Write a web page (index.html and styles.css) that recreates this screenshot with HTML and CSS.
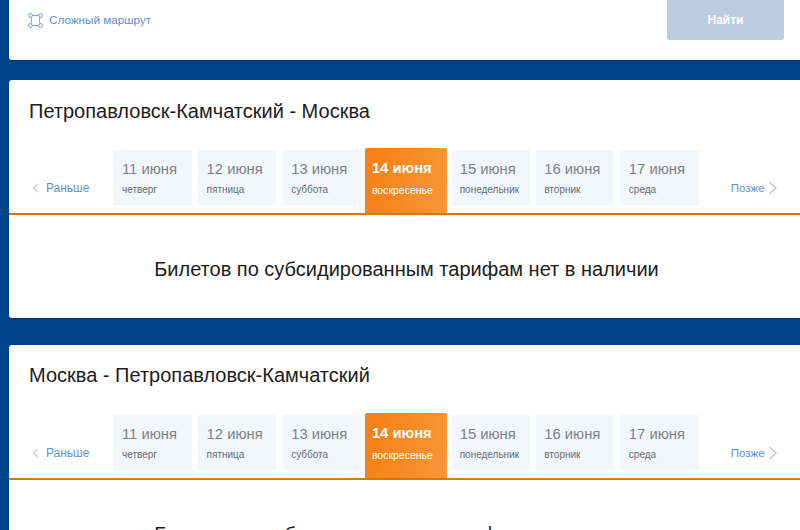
FILE: index.html
```html
<!DOCTYPE html>
<html lang="ru">
  <head>
    <meta charset="UTF-8" />
    <meta name="viewport" content="width=device-width, initial-scale=1.0" />
    <title>Субсидированные билеты</title>
    <link rel="stylesheet" href="styles.css">
  </head>
  <body>
    <div class="card search">
      <a href="#" class="route-link">
        <svg class="route-icon" width="15" height="15" viewBox="0 0 15 15" fill="none" stroke="#6f9bd8" stroke-width="1">
          <path d="M4 2.4 H11 M4 12.6 H11 M3 4.2 Q4 7.5 3 10.8 M12 4.2 Q11 7.5 12 10.8" />
          <circle cx="2.4" cy="2.4" r="1.9" />
          <circle cx="12.6" cy="2.4" r="1.9" />
          <circle cx="2.4" cy="12.6" r="1.9" />
          <circle cx="12.6" cy="12.6" r="1.9" />
        </svg>
        Сложный маршрут
      </a>
      <button class="find-button">Найти</button>
    </div>

    <div class="card flight">
      <h2>Петропавловск-Камчатский - Москва</h2>
      <div class="dates">
        <a href="#" class="nav-link prev">
          <svg width="10" height="14" viewBox="0 0 10 14" fill="none" stroke="#c4c8cd" stroke-width="1.6"><path d="M8.5 1 L2 7 L8.5 13" /></svg>
          Раньше
        </a>
        <div class="tabs">
          <div class="tab"><b>11 июня</b><span>четверг</span></div>
          <div class="tab"><b>12 июня</b><span>пятница</span></div>
          <div class="tab"><b>13 июня</b><span>суббота</span></div>
          <div class="tab active"><b>14 июня</b><span>воскресенье</span></div>
          <div class="tab"><b>15 июня</b><span>понедельник</span></div>
          <div class="tab"><b>16 июня</b><span>вторник</span></div>
          <div class="tab"><b>17 июня</b><span>среда</span></div>
        </div>
        <a href="#" class="nav-link next">
          Позже
          <svg width="10" height="14" viewBox="0 0 10 14" fill="none" stroke="#c4c8cd" stroke-width="1.6"><path d="M1.5 1 L8 7 L1.5 13" /></svg>
        </a>
      </div>
      <p class="message">Билетов по субсидированным тарифам нет в наличии</p>
    </div>

    <div class="card flight">
      <h2>Москва - Петропавловск-Камчатский</h2>
      <div class="dates">
        <a href="#" class="nav-link prev">
          <svg width="10" height="14" viewBox="0 0 10 14" fill="none" stroke="#c4c8cd" stroke-width="1.6"><path d="M8.5 1 L2 7 L8.5 13" /></svg>
          Раньше
        </a>
        <div class="tabs">
          <div class="tab"><b>11 июня</b><span>четверг</span></div>
          <div class="tab"><b>12 июня</b><span>пятница</span></div>
          <div class="tab"><b>13 июня</b><span>суббота</span></div>
          <div class="tab active"><b>14 июня</b><span>воскресенье</span></div>
          <div class="tab"><b>15 июня</b><span>понедельник</span></div>
          <div class="tab"><b>16 июня</b><span>вторник</span></div>
          <div class="tab"><b>17 июня</b><span>среда</span></div>
        </div>
        <a href="#" class="nav-link next">
          Позже
          <svg width="10" height="14" viewBox="0 0 10 14" fill="none" stroke="#c4c8cd" stroke-width="1.6"><path d="M1.5 1 L8 7 L1.5 13" /></svg>
        </a>
      </div>
      <p class="message">Билетов по субсидированным тарифам нет в наличии</p>
    </div>
  </body>
</html>
```

FILE: styles.css
```css
html,
body {
  height: 530px;
  overflow: hidden;
}

body {
  font-family: "Liberation Sans", Arial, sans-serif;
  margin: 0;
  padding-left: 9px;
  background-color: #00448c;
}

.card {
  background-color: #fff;
  border-radius: 3px 0 0 3px;
  box-shadow: 0 1px 1px #00306a;
}

.search {
  height: 60px;
  display: flex;
  justify-content: space-between;
  align-items: flex-start;
  padding: 0 16px 0 19px;
  margin-bottom: 20px;
  border-top-left-radius: 0;
}

.route-link {
  display: flex;
  align-items: flex-start;
  gap: 6px;
  margin-top: 13px;
  font-size: 11.7px;
  line-height: 13px;
  color: #5f8fd3;
  text-decoration: none;
}

.find-button {
  width: 117px;
  height: 40px;
  border: none;
  border-radius: 0 0 3px 3px;
  background-color: #bccbdf;
  color: #fff;
  font-family: inherit;
  font-size: 12px;
  font-weight: bold;
}

.flight {
  height: 238px;
  margin-bottom: 27px;
}

h2 {
  margin: 0;
  padding: 20px 0 0 20px;
  height: 50px;
  box-sizing: border-box;
  font-size: 20px;
  line-height: 22px;
  font-weight: normal;
  color: #1c1c1c;
}

.flight + .flight h2 {
  padding-top: 19px;
}

.dates {
  display: flex;
  align-items: flex-end;
  height: 65px;
  margin-top: 18px;
  border-bottom: 2px solid #d9760f;
}

.tabs {
  display: flex;
  align-items: flex-end;
  gap: 6.1px;
}

.tab {
  width: 78.5px;
  height: 55px;
  margin-bottom: 8px;
  box-sizing: border-box;
  padding: 11px 0 0 8.6px;
  background-color: #f2f7fd;
  color: #7c8088;
}

.tab b {
  display: block;
  font-size: 14.8px;
  line-height: 16px;
  font-weight: normal;
}

.tab span {
  display: block;
  margin-top: 7px;
  font-size: 10px;
  line-height: 12px;
  color: #666b72;
}

.tab.active {
  width: 82px;
  height: 65px;
  margin: 0 -1.9px 0 -2.3px;
  padding: 12px 0 0 7px;
  border-radius: 2px 2px 0 0;
  background: linear-gradient(100deg, #f57f12, #f9963a);
  color: #fff;
}

.tab.active b {
  font-weight: bold;
}

.tab.active span {
  color: #fff;
  margin-top: 8px;
  font-size: 10.5px;
}

.nav-link {
  display: flex;
  align-items: center;
  gap: 7px;
  margin-bottom: 18px;
  font-size: 12px;
  line-height: 14px;
  color: #5f8fd3;
  text-decoration: none;
}

.prev {
  width: 80.4px;
  padding-left: 23px;
  box-sizing: border-box;
  margin-right: 24px;
}

.next {
  margin-left: 32px;
  gap: 3px;
  font-size: 11.5px;
}

.message {
  margin: 0;
  padding: 42px 0 0 4px;
  text-align: center;
  font-size: 20px;
  line-height: 24px;
  color: #1c1c1c;
}
```
